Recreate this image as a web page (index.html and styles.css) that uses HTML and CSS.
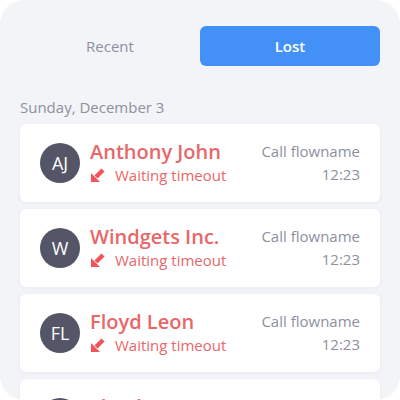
FILE: index.html
```html
<!DOCTYPE html>
<html lang="en">

<head>
    <meta charset="UTF-8">
    <title>Lost Calls</title>
    <link rel="stylesheet" href="styles.css">
</head>

<body>

    <div class="panel">
        <div class="tabs">
            <button class="tab">Recent</button>
            <button class="tab active">Lost</button>
        </div>

        <div class="day">Sunday, December 3</div>

        <ul class="calls">
            <li class="call">
                <div class="avatar">AJ</div>
                <div class="info">
                    <div class="name">Anthony John</div>
                    <div class="status">
                        <svg class="arrow" viewBox="0 0 16 16"><path d="M13 3 L6 10" /><polygon points="1,15 1,6 10,15" /></svg>
                        Waiting timeout
                    </div>
                </div>
                <div class="meta">
                    <div>Call flowname</div>
                    <div>12:23</div>
                </div>
            </li>
            <li class="call">
                <div class="avatar">W</div>
                <div class="info">
                    <div class="name">Windgets Inc.</div>
                    <div class="status">
                        <svg class="arrow" viewBox="0 0 16 16"><path d="M13 3 L6 10" /><polygon points="1,15 1,6 10,15" /></svg>
                        Waiting timeout
                    </div>
                </div>
                <div class="meta">
                    <div>Call flowname</div>
                    <div>12:23</div>
                </div>
            </li>
            <li class="call">
                <div class="avatar">FL</div>
                <div class="info">
                    <div class="name">Floyd Leon</div>
                    <div class="status">
                        <svg class="arrow" viewBox="0 0 16 16"><path d="M13 3 L6 10" /><polygon points="1,15 1,6 10,15" /></svg>
                        Waiting timeout
                    </div>
                </div>
                <div class="meta">
                    <div>Call flowname</div>
                    <div>12:23</div>
                </div>
            </li>
            <li class="call">
                <div class="avatar">FL</div>
                <div class="info">
                    <div class="name">Floyd Leon</div>
                    <div class="status">
                        <svg class="arrow" viewBox="0 0 16 16"><path d="M13 3 L6 10" /><polygon points="1,15 1,6 10,15" /></svg>
                        Waiting timeout
                    </div>
                </div>
                <div class="meta">
                    <div>Call flowname</div>
                    <div>12:23</div>
                </div>
            </li>
        </ul>
    </div>

</body>

</html>
```

FILE: styles.css
```css
body {
    margin: 0;
    background: #fff;
    font-family: "Open Sans", Arial, sans-serif;
    overflow: hidden;
}

.panel {
    width: 400px;
    height: 400px;
    box-sizing: border-box;
    padding: 26px 20px 0;
    background: #f3f4f8;
    border-radius: 24px;
    overflow: hidden;
}

.tabs {
    display: grid;
    grid-template-columns: 1fr 1fr;
}

.tab {
    height: 40px;
    border: none;
    border-radius: 6px;
    background: none;
    font-family: inherit;
    font-size: 15px;
    font-weight: 500;
    color: #8d8fa0;
}

.tab.active {
    background: #4391f6;
    color: #fff;
    font-weight: 600;
}

.day {
    margin-top: 31px;
    font-size: 15px;
    color: #8e90a0;
}

.calls {
    list-style: none;
    margin: 7px 0 0;
    padding: 0;
    display: flex;
    flex-direction: column;
    gap: 7px;
}

.call {
    height: 78px;
    box-sizing: border-box;
    display: flex;
    align-items: center;
    padding: 0 20px;
    background: #fff;
    border-radius: 6px;
    box-shadow: 0 1px 4px rgba(60, 64, 90, 0.06);
}

.avatar {
    width: 40px;
    height: 40px;
    flex-shrink: 0;
    border-radius: 50%;
    background: #545567;
    color: #fff;
    font-size: 18px;
    display: flex;
    align-items: center;
    justify-content: center;
}

.info {
    flex: 1;
    margin-left: 10px;
    color: #e86769;
}

.name {
    font-size: 20px;
    font-weight: 600;
    line-height: 24px;
}

.status {
    display: flex;
    align-items: center;
    gap: 9px;
    font-size: 15px;
    line-height: 22px;
}

.arrow {
    width: 16px;
    height: 16px;
    fill: #f0545a;
}

.arrow path {
    stroke: #f0545a;
    stroke-width: 4.5;
}

.meta {
    text-align: right;
    font-size: 15px;
    line-height: 23px;
    color: #8e90a0;
}
```
